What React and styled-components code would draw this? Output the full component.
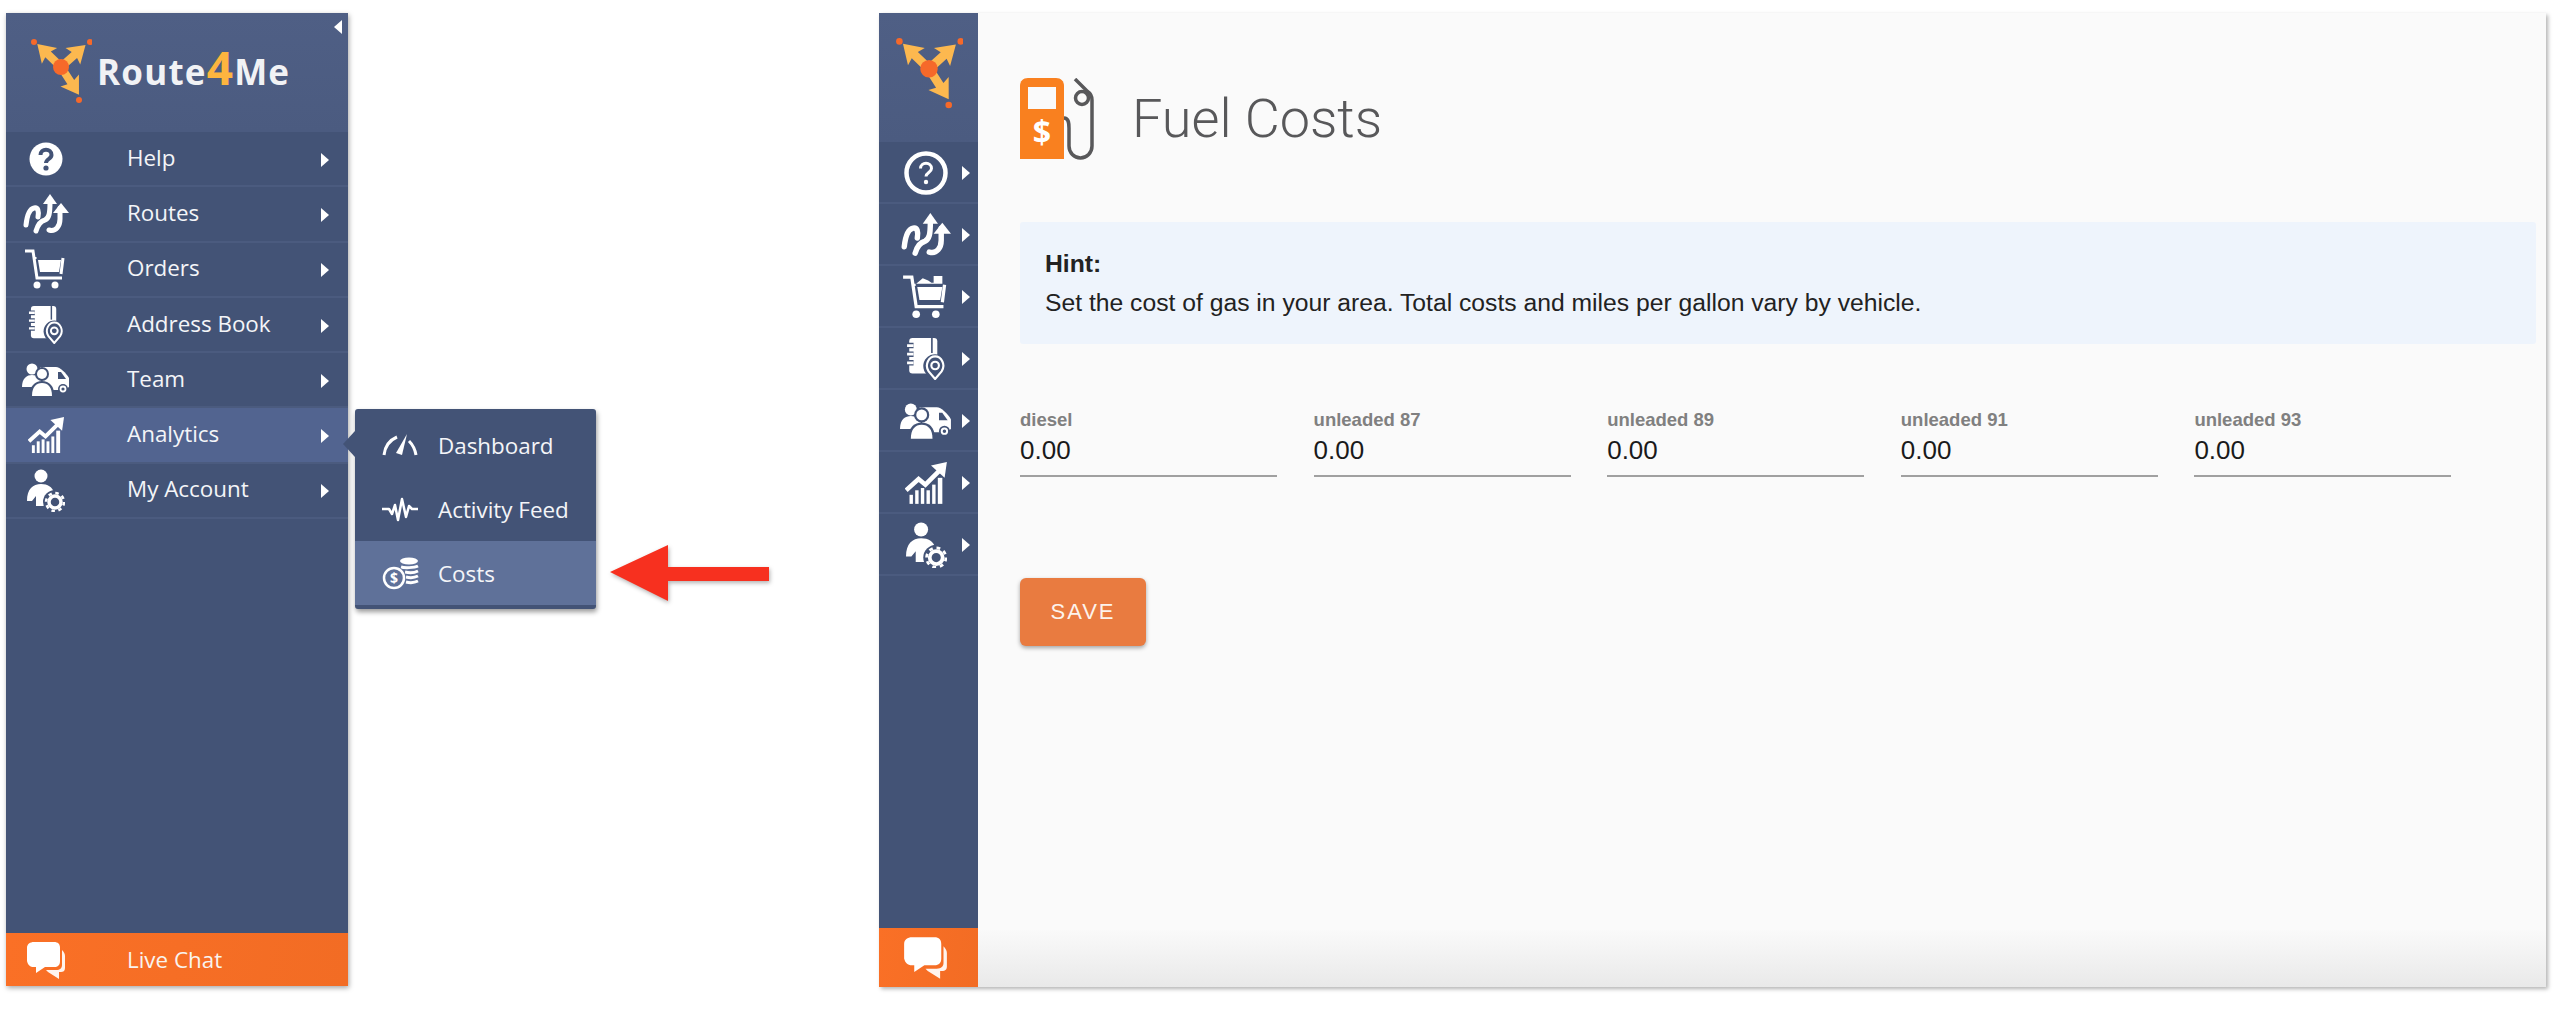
import React from 'react';
import styled, { createGlobalStyle } from 'styled-components';

const NAVY = '#435376';

const GlobalStyle = createGlobalStyle`
    html, body {
        margin: 0;
        background: #fff;
    }
    * {
        box-sizing: border-box;
    }
`;

const Page = styled.div`
    display: flex;
    align-items: flex-start;
    width: 2558px;
    height: 1014px;
    padding: 13px 0 0 6px;
    overflow: hidden;
    background: #fff;
`;

/* expanded sidebar */

const Sidebar = styled.aside`
    display: flex;
    flex-direction: column;
    flex: none;
    position: relative;
    width: 342px;
    height: 973px;
    background: ${NAVY};
    box-shadow: 1px 2px 5px rgba(0, 0, 0, 0.35);
    font-family: "Open Sans", sans-serif;
`;

const LogoArea = styled.div`
    display: flex;
    align-items: flex-start;
    gap: 5px;
    height: 119px;
    padding: 25px 0 0 24px;
    background: linear-gradient(#4f5f85, #4b5b80);
`;

const Wordmark = styled.div`
    margin-top: 9px;
    color: #f1f2f5;
    font-size: 35px;
    line-height: 46px;
    font-weight: 700;
    letter-spacing: 1.2px;
`;

const Four = styled.span`
    color: #fdb53f;
    font-size: 46px;
    line-height: 40px;
`;

const CollapseArrow = styled.div`
    position: absolute;
    top: 7px;
    right: 6px;
    border-style: solid;
    border-width: 7px 8px 7px 0;
    border-color: transparent #fff transparent transparent;
`;

const MenuRow = styled.div`
    display: flex;
    align-items: center;
    position: relative;
    height: 55.3px;
    padding-right: 19px;
    color: #f4f5f8;
    font-size: 22.4px;
    background: ${(p) => (p.$active ? '#526490' : 'transparent')};
    border-bottom: 2px solid #4b5b7f;
`;

const MenuIcon = styled.div`
    display: flex;
    align-items: center;
    justify-content: center;
    flex: none;
    width: 80px;
`;

const MenuLabel = styled.span`
    flex: 1;
    padding: 0 0 ${(p) => p.$lift || 0}px 41px;
`;

const Caret = styled.div`
    flex: none;
    margin-top: ${(p) => p.$drop || 0}px;
    border-style: solid;
    border-width: 7px 0 7px 8px;
    border-color: transparent transparent transparent #fff;
`;

const ChatRow = styled.div`
    display: flex;
    align-items: center;
    margin-top: auto;
    height: 53px;
    color: #f9f3ee;
    font-size: 22.4px;
    background: linear-gradient(100deg, #fa7026, #f26c24);
`;

/* flyout next to Analytics */

const Flyout = styled.div`
    position: absolute;
    top: 1px;
    left: 349px;
    width: 241px;
    padding-top: 4px;
    padding-bottom: 4px;
    background: ${NAVY};
    border-radius: 3px;
    box-shadow: 1px 3px 5px rgba(0, 0, 0, 0.4);

    &::before {
        content: "";
        position: absolute;
        top: 22px;
        left: -12px;
        border-style: solid;
        border-width: 13px 12px 13px 0;
        border-color: transparent ${NAVY} transparent transparent;
    }
`;

const FlyoutItem = styled.div`
    display: flex;
    align-items: center;
    height: 64px;
    color: #f4f5f8;
    font-size: 22.4px;
    background: ${(p) => (p.$active ? '#5f7199' : 'transparent')};
`;

const FlyoutIcon = styled.div`
    display: flex;
    align-items: center;
    justify-content: center;
    flex: none;
    width: 83px;
    padding-left: 7px;
`;

const PointerArrow = styled.svg`
    position: absolute;
    top: 134px;
    left: 254px;
    filter: drop-shadow(1px 2px 2px rgba(0, 0, 0, 0.3));
`;

/* fuel costs window */

const Window = styled.section`
    display: flex;
    flex: none;
    width: 1667px;
    height: 974px;
    margin-left: 531px;
    box-shadow: 2px 2px 4px rgba(0, 0, 0, 0.3);
`;

const Rail = styled.nav`
    display: flex;
    flex-direction: column;
    flex: none;
    width: 99px;
    background: ${NAVY};
`;

const RailLogo = styled.div`
    display: flex;
    align-items: flex-start;
    justify-content: center;
    height: 129px;
    padding-top: 24px;
    background: linear-gradient(#4f5f85, #4b5b80);
`;

const RailRow = styled.div`
    display: flex;
    align-items: center;
    height: 62px;
    padding-top: 2px;
    border-bottom: 2px solid #4b5b7f;
`;

const RailIcon = styled.div`
    display: flex;
    align-items: center;
    justify-content: center;
    flex: none;
    width: 72px;
    margin-left: 11px;
`;

const RailChat = styled.div`
    display: flex;
    align-items: center;
    justify-content: center;
    margin-top: auto;
    height: 59px;
    padding-right: 6px;
    background: linear-gradient(100deg, #fa7026, #f26c24);
`;

const Content = styled.main`
    flex: 1;
    padding: 65px 10px 0 42px;
    background: linear-gradient(#fafafa 94%, #e9e9e9 100%);
    font-family: "Liberation Sans", Arial, sans-serif;
`;

const TitleRow = styled.header`
    display: flex;
    align-items: center;
    gap: 38px;
    height: 82px;
`;

const Title = styled.h1`
    margin: 0;
    color: #58585a;
    font-family: Roboto, "Liberation Sans", sans-serif;
    font-size: 54px;
    font-weight: 300;
    line-height: 60px;
`;

const Hint = styled.div`
    margin-top: 62px;
    height: 122px;
    padding: 22px 25px 0;
    color: #222;
    font-size: 24.7px;
    line-height: 39px;
    background: #eef4fc;
    border-radius: 3px;
`;

const Fields = styled.div`
    display: flex;
    gap: 36.6px;
    margin-top: 62px;
`;

const Field = styled.div`
    width: 257px;
    height: 71px;
    padding-top: 3px;
    border-bottom: 2px solid #a0a0a0;
`;

const FieldLabel = styled.div`
    color: #808080;
    font-size: 18.5px;
    font-weight: 700;
    line-height: 22px;
`;

const FieldValue = styled.div`
    margin-top: 4px;
    color: #1a1a1a;
    font-size: 26px;
    line-height: 30px;
`;

const SaveButton = styled.button`
    display: block;
    width: 126px;
    height: 68px;
    margin-top: 101px;
    padding: 0;
    color: #fdf3ec;
    font-family: inherit;
    font-size: 22px;
    letter-spacing: 2px;
    background: #e97b40;
    border: none;
    border-radius: 6px;
    box-shadow: 0 2px 4px rgba(0, 0, 0, 0.35);
`;

/* drawings */

const LOGO_ARROW = 'M0-33 11-16 4-18V-4H-4V-18L-11-16Z';

function LogoMark({ width }) {
    return (
        <svg width={width} viewBox="-31 -29 62 66">
            <g fill="#fcb84f">
                <path d={LOGO_ARROW} transform="rotate(-46)" />
                <path d={LOGO_ARROW} transform="rotate(48)" />
                <path d={LOGO_ARROW} transform="rotate(147)" />
            </g>
            <circle r="8" fill="#f6692a" />
            <g fill="#f6692a">
                <circle cx="-27" cy="-25" r="3" />
                <circle cx="29" cy="-25" r="3" />
                <circle cx="18" cy="33" r="3" />
            </g>
        </svg>
    );
}

function HelpSolid({ width }) {
    return (
        <svg width={width} viewBox="0 0 34 34">
            <circle cx="17" cy="17" r="16.5" fill="#fff" />
            <path d="M11.5 13c0-7 11-7 11 0 0 4-5.500 4-5.500 8" fill="none" stroke={NAVY} strokeWidth="4" />
            <circle cx="17" cy="26" r="2.6" fill={NAVY} />
        </svg>
    );
}

function HelpRing({ width }) {
    return (
        <svg width={width} viewBox="0 0 44 44">
            <circle cx="22" cy="22" r="19.500" fill="none" stroke="#fff" strokeWidth="4.500" />
            <path d="M16.500 17.500c0-7 11-7 11 0 0 4-5.500 4-5.500 8" fill="none" stroke="#fff" strokeWidth="3" />
            <circle cx="22" cy="31" r="2.200" fill="#fff" />
        </svg>
    );
}

function RoutesIcon({ width }) {
    return (
        <svg width={width} viewBox="0 0 46 40">
            <g fill="none" stroke="#fff" strokeWidth="5" strokeLinecap="round">
                <path d="M3 31C4 22 6 15 11 14 15 13 16 17 15 23" />
                <path d="M13 37C15 30 18 27 22 26 26 24 27 20 27 8" />
                <path d="M26 36C33 38 37 32 37 25V14" />
            </g>
            <path d="M27 0 34 10H20Z" fill="#fff" />
            <path d="M38 9 46 19H30Z" fill="#fff" />
        </svg>
    );
}

function CartIcon({ width, loaded }) {
    return (
        <svg width={width} viewBox="0 0 44 40">
            <path d="M1 2H9L13 29H38" fill="none" stroke="#fff" strokeWidth="3" />
            <path d="M11 10V8M39 9 37 25" fill="none" stroke="#fff" strokeWidth="3" />
            <path d="M14 11H37L35 23H16Z" fill="#fff" />
            {loaded && <path d="M13 8 19 3 24 5 27 7H29V1H37V8Z" fill="#fff" />}
            <circle cx="13" cy="36" r="3.500" fill="#fff" />
            <circle cx="31" cy="36" r="3.500" fill="#fff" />
        </svg>
    );
}

function BookIcon({ width }) {
    return (
        <svg width={width} viewBox="0 0 38 39">
            <rect x="3" y="0" width="26" height="33" rx="3" fill="#fff" />
            <path d="M0 7H7M0 15H7M0 23H7" stroke={NAVY} strokeWidth="5" />
            <path d="M1 7H7M1 15H7M1 23H7" stroke="#fff" strokeWidth="2.500" />
            <path d="M24 0V14" stroke={NAVY} strokeWidth="1.500" />
            <circle cx="27" cy="26" r="11" fill={NAVY} />
            <path d="M27 38 21 31C17 25 21 17 27 17 33 17 37 25 33 31Z" fill={NAVY} stroke="#fff" strokeWidth="2" />
            <circle cx="27" cy="25.500" r="3.500" fill="none" stroke="#fff" strokeWidth="2" />
        </svg>
    );
}

function TeamIcon({ width }) {
    return (
        <svg width={width} viewBox="0 0 48 34">
            <path d="M18 4H34C38 4 44 10 47 15V24L42 27H22Z" fill="#fff" />
            <path d="M36 9H39L44 16H36Z" fill={NAVY} />
            <circle cx="41" cy="26" r="5" fill={NAVY} />
            <circle cx="41" cy="26" r="2.500" fill="none" stroke="#fff" strokeWidth="1.800" />
            <circle cx="10" cy="6" r="5.500" fill="#fff" />
            <path d="M0 24C0 15 5 12 10 12 15 12 20 15 20 24Z" fill="#fff" />
            <circle cx="20" cy="11" r="7" fill={NAVY} />
            <path d="M8 34C7 23 13 18 20 18 27 18 33 23 32 34Z" fill={NAVY} />
            <circle cx="20" cy="11" r="5" fill="#fff" />
            <path d="M10 33C10 24 14 20 20 20 26 20 30 24 30 33Z" fill="#fff" />
        </svg>
    );
}

function AnalyticsIcon({ width }) {
    return (
        <svg width={width} viewBox="0 0 38 38">
            <path d="M1 25 12 15 18 20 30 8" fill="none" stroke="#fff" strokeWidth="4" />
            <path d="M23 3 37 0 35 14Z" fill="#fff" />
            <g fill="#fff">
                <rect x="4" y="29" width="3" height="8" />
                <rect x="9" y="25" width="3" height="12" />
                <rect x="14" y="23" width="3" height="14" />
                <rect x="19" y="25" width="3" height="12" />
                <rect x="24" y="20" width="3" height="17" />
                <rect x="29" y="14" width="4" height="23" />
            </g>
        </svg>
    );
}

function AccountIcon({ width }) {
    return (
        <svg width={width} viewBox="0 0 38 43">
            <circle cx="14" cy="7" r="6.500" fill="#fff" />
            <path d="M0 32C0 20 6 15 14 15 21 15 25 18 27 23L20 37H9V27L5 32Z" fill="#fff" />
            <circle cx="28" cy="33" r="12" fill={NAVY} />
            <circle cx="28" cy="33" r="6" fill="none" stroke="#fff" strokeWidth="3.500" />
            <circle cx="28" cy="33" r="9" fill="none" stroke="#fff" strokeWidth="2.500" strokeDasharray="3.500 3.570" />
        </svg>
    );
}

function ChatIcon({ width }) {
    return (
        <svg width={width} viewBox="0 0 40 38">
            <path d="M8 1H28C32 1 34 3 34 7V20C34 24 32 26 28 26H19L10 32 10 26H8C4 26 2 24 1 20V7C1 3 4 1 8 1Z" fill="#fff" />
            <path d="M36 9C38 11 39 13 39 15V27C39 30 37 31 35 31H33L33 38 22 31 20 29H30C34 29 36 27 36 24Z" fill="#fff" opacity="0.92" />
        </svg>
    );
}

function GaugeIcon({ width }) {
    return (
        <svg width={width} viewBox="0 0 36 22">
            <path d="M2 21C3 12 8 6 15 3" fill="none" stroke="#fff" strokeWidth="3" />
            <path d="M27 7C30 10 33 15 34 21" fill="none" stroke="#fff" strokeWidth="3" />
            <path d="M14 19 25 0 20 21Z" fill="#fff" />
        </svg>
    );
}

function PulseIcon({ width }) {
    return (
        <svg width={width} viewBox="0 0 38 26">
            <path d="M1 13H8L11 18 14 9 17 24 21 3 25 21 28 10 31 13H37" fill="none" stroke="#fff" strokeWidth="2.500" strokeLinejoin="round" />
        </svg>
    );
}

function CoinsIcon({ width }) {
    return (
        <svg width={width} viewBox="0 0 37 33">
            <ellipse cx="27" cy="4" rx="9" ry="3.500" fill="#fff" />
            <path d="M19 10C22 11 32 11 36 9M23 15C27 16 32 16 36 14M24 20C28 21 32 21 36 19M24 25C28 26 32 26 36 24" fill="none" stroke="#fff" strokeWidth="3" />
            <circle cx="12" cy="21" r="12" fill="#5f7199" />
            <circle cx="12" cy="21" r="10" fill="none" stroke="#fff" strokeWidth="2.500" />
            <text x="12" y="26" textAnchor="middle" fill="#fff" fontFamily="Open Sans" fontWeight="700" fontSize="14">$</text>
        </svg>
    );
}

function FuelIcon() {
    return (
        <svg width="74" height="82" viewBox="0 0 74 82">
            <path d="M8 0H36C41 0 44 3 44 8V81H0V8C0 3 3 0 8 0Z" fill="#f9801f" />
            <rect x="8" y="9" width="28" height="22" fill="#fafafa" />
            <text x="22" y="66" textAnchor="middle" fill="#fff" fontFamily="Open Sans" fontWeight="700" fontSize="32">$</text>
            <g fill="none" stroke="#58585a" strokeWidth="3.500">
                <path d="M44 40C49 40 49 46 49 50V68A11.500 12 0 0 0 72 68V22C72 18 70 15 67 13L55 1" />
                <circle cx="62" cy="20" r="6.500" />
            </g>
        </svg>
    );
}

const menu = [
    { label: 'Help', icon: <HelpSolid width={34} /> },
    { label: 'Routes', icon: <RoutesIcon width={46} /> },
    { label: 'Orders', icon: <CartIcon width={44} /> },
    { label: 'Address Book', icon: <BookIcon width={37} /> },
    { label: 'Team', icon: <TeamIcon width={48} /> },
    { label: 'Analytics', icon: <AnalyticsIcon width={37} />, active: true },
    { label: 'My Account', icon: <AccountIcon width={38} /> },
];

const railIcons = [
    <HelpRing key="help" width={44} />,
    <RoutesIcon key="routes" width={50} />,
    <CartIcon key="orders" width={48} loaded />,
    <BookIcon key="book" width={41} />,
    <TeamIcon key="team" width={52} />,
    <AnalyticsIcon key="analytics" width={43} />,
    <AccountIcon key="account" width={41} />,
];

const fuels = ['diesel', 'unleaded 87', 'unleaded 89', 'unleaded 91', 'unleaded 93'];

export default function App() {
    return (
        <>
            <GlobalStyle />
            <Page>
                <Sidebar>
                    <LogoArea>
                        <LogoMark width={62} />
                        <Wordmark>Route<Four>4</Four>Me</Wordmark>
                    </LogoArea>
                    <CollapseArrow />
                    {menu.map((item) => (
                        <MenuRow key={item.label} $active={item.active}>
                            <MenuIcon>{item.icon}</MenuIcon>
                            <MenuLabel $lift={3}>{item.label}</MenuLabel>
                            <Caret $drop={2} />
                            {item.active && (
                                <Flyout>
                                    <FlyoutItem>
                                        <FlyoutIcon><GaugeIcon width={36} /></FlyoutIcon>
                                        Dashboard
                                    </FlyoutItem>
                                    <FlyoutItem>
                                        <FlyoutIcon><PulseIcon width={38} /></FlyoutIcon>
                                        Activity Feed
                                    </FlyoutItem>
                                    <FlyoutItem $active>
                                        <FlyoutIcon><CoinsIcon width={37} /></FlyoutIcon>
                                        Costs
                                    </FlyoutItem>
                                    <PointerArrow width="162" height="60" viewBox="0 0 162 60">
                                        <path d="M1 29 59 2V24H160V38H59V58Z" fill="#f7301f" />
                                    </PointerArrow>
                                </Flyout>
                            )}
                        </MenuRow>
                    ))}
                    <ChatRow>
                        <MenuIcon><ChatIcon width={40} /></MenuIcon>
                        <MenuLabel>Live Chat</MenuLabel>
                    </ChatRow>
                </Sidebar>

                <Window>
                    <Rail>
                        <RailLogo><LogoMark width={68} /></RailLogo>
                        {railIcons.map((icon) => (
                            <RailRow key={icon.key}>
                                <RailIcon>{icon}</RailIcon>
                                <Caret />
                            </RailRow>
                        ))}
                        <RailChat><ChatIcon width={45} /></RailChat>
                    </Rail>
                    <Content>
                        <TitleRow>
                            <FuelIcon />
                            <Title>Fuel Costs</Title>
                        </TitleRow>
                        <Hint>
                            <strong>Hint:</strong>
                            <br />
                            Set the cost of gas in your area. Total costs and miles per gallon vary by vehicle.
                        </Hint>
                        <Fields>
                            {fuels.map((name) => (
                                <Field key={name}>
                                    <FieldLabel>{name}</FieldLabel>
                                    <FieldValue>0.00</FieldValue>
                                </Field>
                            ))}
                        </Fields>
                        <SaveButton>SAVE</SaveButton>
                    </Content>
                </Window>
            </Page>
        </>
    );
}
